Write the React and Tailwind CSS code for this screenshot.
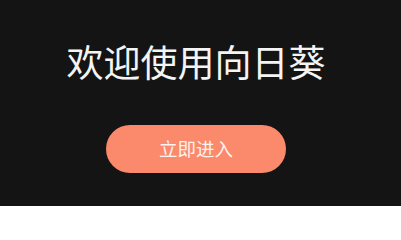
import React from 'react';

const App = () => {
  return (
    <div
      className="w-[401px] h-[206px] bg-[#141414] flex flex-col items-center pr-[9px] overflow-hidden"
      style={{ fontFamily: '"Noto Sans CJK SC", "Noto Sans", sans-serif' }}
    >
      <h1 className="mt-[37px] text-[37px] leading-[48px] text-[#f4f4f4] font-normal">欢迎使用向日葵</h1>
      <button className="mt-[40px] w-[180px] h-[48px] rounded-full bg-[#fa8a6b] text-[#fdf3ef] text-[18.5px]">
        立即进入
      </button>
    </div>
  );
};

export default App;
